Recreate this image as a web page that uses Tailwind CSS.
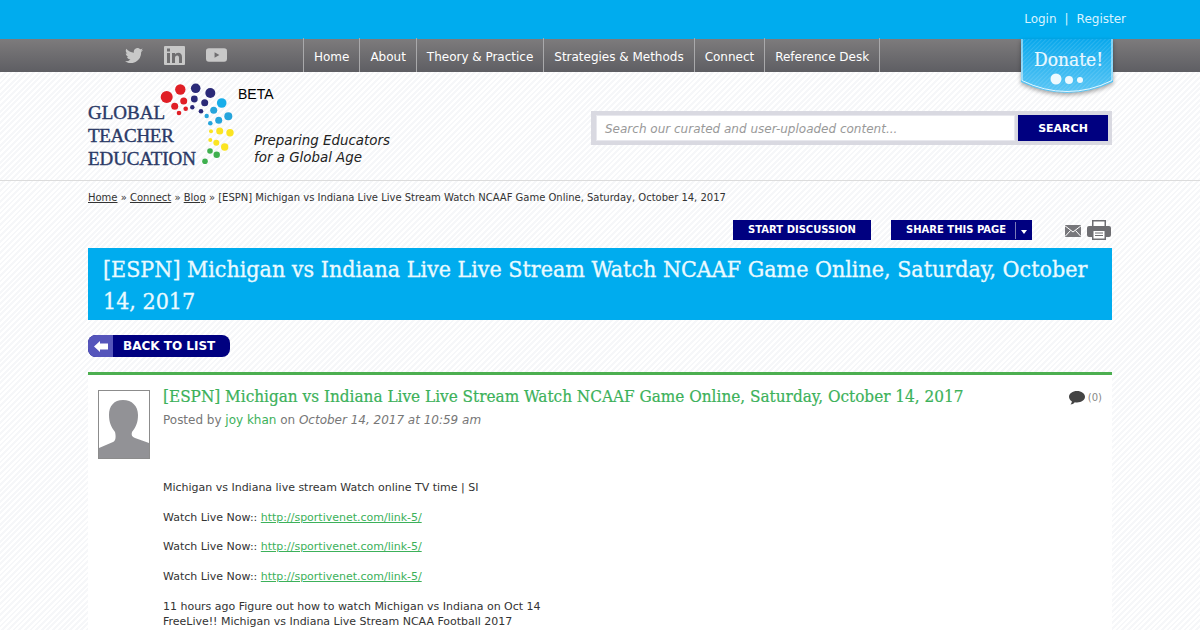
<!DOCTYPE html>
<html lang="en">
<head>
<meta charset="utf-8">
<title>Global Teacher Education</title>
<script src="https://cdn.jsdelivr.net/npm/@tailwindcss/browser@4"></script>
</head>
<body class="h-[630px] overflow-hidden font-['DejaVu_Sans',sans-serif] text-[11px] text-[#333] bg-[repeating-linear-gradient(135deg,#ffffff_0px,#ffffff_2px,#f6f7f9_2px,#f6f7f9_4px)]">
<div class="flex h-[39px] items-center justify-end bg-[#00acee] pr-[74px] pb-[1px] text-xs text-[#d8f3ff]">
  <a>Login</a><span class="mx-2">|</span><a>Register</a>
</div>
<nav class="relative flex h-[33px] bg-[linear-gradient(#7d7b7c,#5e5e63)] pl-[123px] text-xs text-white">
  <div class="flex w-[180px] items-center pb-[1px]">
    <svg class="ml-[1px] h-[15px] w-[20px]" viewBox="0 0 24 20" fill="#c8c8c8"><path d="M24 2.4c-.9.4-1.800.7-2.800.8 1-.6 1.800-1.600 2.200-2.700-.9.6-2 1-3.100 1.200A4.900 4.900 0 0 0 11.900 6.200C7.800 6 4.200 4 1.700.9.400 3.200 1 6.100 3.200 7.500c-.8 0-1.600-.2-2.200-.6 0 2.400 1.700 4.400 3.900 4.900-.7.200-1.500.2-2.200.1.600 2 2.400 3.400 4.600 3.400A9.900 9.900 0 0 1 0 17.800 13.900 13.900 0 0 0 21.500 5.400c1-.7 1.800-1.600 2.500-3z"/></svg>
    <svg class="ml-[20px] h-[19px] w-[21px]" viewBox="0 0 21 19"><rect width="21" height="19" rx="1" fill="#c8c8c8"/><path fill="#6f6e70" d="M3 7h3v10H3zM3 2.500h3v3H3zM8 7h3v1.500c.6-1 1.700-1.700 3.200-1.700 2.600 0 3.800 1.600 3.800 4.500V17h-3v-5c0-1.500-.5-2.500-1.800-2.500S11 10.500 11 12v5H8z"/></svg>
    <svg class="ml-[21px] h-[14px] w-[21px]" viewBox="0 0 22 14"><rect width="22" height="14" rx="3" fill="#c8c8c8"/><path fill="#6f6e70" d="M9 4l5 3-5 3z"/></svg>
  </div>
  <div class="flex border-l border-[#a9a9ab] -mt-[1px] tracking-[-0.01px]">
    <a class="flex items-center border-r border-[#a9a9ab] px-[10px] pt-[4px]">Home</a>
    <a class="flex items-center border-r border-[#a9a9ab] px-[10px] pt-[4px]">About</a>
    <a class="flex items-center border-r border-[#a9a9ab] px-[10px] pt-[4px]">Theory &amp; Practice</a>
    <a class="flex items-center border-r border-[#a9a9ab] px-[10px] pt-[4px]">Strategies &amp; Methods</a>
    <a class="flex items-center border-r border-[#a9a9ab] px-[10px] pt-[4px]">Connect</a>
    <a class="flex items-center border-r border-[#a9a9ab] px-[10px] pt-[4px]">Reference Desk</a>
  </div>
  <div class="absolute left-[1020px] top-[0px] h-[56px] w-[96px]">
    <svg class="absolute inset-0 drop-shadow-[0_2px_2px_rgba(0,0,0,0.35)]" width="96" height="56" viewBox="0 0 96 56">
      <defs>
        <linearGradient id="dg" x1="0" y1="0" x2="0" y2="1"><stop offset="0" stop-color="#08a8ec"/><stop offset="1" stop-color="#5cc6f5"/></linearGradient>
        <pattern id="dh" width="3" height="3" patternUnits="userSpaceOnUse" patternTransform="rotate(-45)"><rect width="3" height="1" fill="#ffffff" fill-opacity="0.12"/></pattern>
      </defs>
      <path d="M1 0H93V43Q70 54 47 54Q24 54 1 43Z" fill="url(#dg)"/>
      <path d="M1 0H93V43Q70 54 47 54Q24 54 1 43Z" fill="url(#dh)"/>
      <path d="M2 0V41.500Q24 52.500 47 52.500Q70 52.500 92 41.500V0" fill="none" stroke="#e4f6fe" stroke-width="1"/>
      <circle cx="36" cy="40" r="5.500" fill="#eef9fe"/><circle cx="49" cy="41" r="4" fill="#eef9fe"/><circle cx="60" cy="41" r="3" fill="#eef9fe"/>
    </svg>
    <span class="absolute left-[14px] top-[9px] font-['DejaVu_Serif_Condensed','DejaVu_Serif',serif] text-[19px] leading-[22px] text-[#eaf8ff] [-webkit-text-stroke:0.2px_#eaf8ff]">Donate!</span>
  </div>
</nav>
<header class="flex h-[109px] items-start justify-between border-b border-[#dcdcdc] px-[88px]">
  <div class="relative h-[108px] w-[310px]">
    <div class="absolute left-0 top-[29px] font-['Liberation_Serif',serif] text-[19px] leading-[23px] text-[#2b3a67] [-webkit-text-stroke:0.4px_#2b3a67]">GLOBAL<br><span class="tracking-[-0.3px]">TEACHER</span><br><span class="tracking-[-0.1px]">EDUCATION</span></div>
    <svg class="absolute left-[62px] top-[0px]" width="90" height="108" viewBox="150 72 90 108">
      <g fill="#e01f26"><circle cx="166.700" cy="97" r="6"/><circle cx="180.300" cy="89.500" r="5.200"/><circle cx="183.700" cy="101" r="3.500"/><circle cx="174.700" cy="106.300" r="3.500"/><circle cx="185.700" cy="108.700" r="2.300"/><circle cx="179" cy="113" r="2.300"/></g>
      <g fill="#2b2a78"><circle cx="195.700" cy="88.300" r="4.800"/><circle cx="210.300" cy="93" r="5"/><circle cx="194.300" cy="99" r="3.400"/><circle cx="204.700" cy="102.700" r="3.500"/><circle cx="192.300" cy="107.300" r="2.200"/><circle cx="201" cy="111.300" r="2.300"/></g>
      <g fill="#26a5dc"><circle cx="221.700" cy="103" r="4.800" fill="#18aeea"/><circle cx="213.700" cy="110.300" r="3.500"/><circle cx="228.300" cy="116.300" r="4"/><circle cx="206.700" cy="116" r="2.200"/><circle cx="218.700" cy="120.300" r="3.500"/><circle cx="210.300" cy="123.300" r="2.300"/></g>
      <g fill="#fbe421"><circle cx="219.700" cy="131" r="3.500"/><circle cx="230" cy="132.700" r="3.700"/><circle cx="211" cy="131.300" r="2"/><circle cx="210.300" cy="140" r="2"/><circle cx="216.300" cy="142.700" r="3"/><circle cx="224.700" cy="147" r="3.700"/></g>
      <g fill="#3fb04f"><circle cx="210" cy="151" r="2.800"/><circle cx="216.700" cy="154.700" r="3.200"/><circle cx="205" cy="161.300" r="2.800"/></g>
    </svg>
    <span class="absolute left-[150px] top-[14px] font-['Liberation_Sans',sans-serif] text-sm leading-4 text-black">BETA</span>
    <div class="absolute left-[166px] top-[60px] text-[13.4px] leading-[17px] italic text-[#222]">Preparing Educators<br>for a Global Age</div>
  </div>
  <form class="mt-[39px] flex h-[34px] w-[521px] items-center bg-[#d9d9e1] pl-[5px]">
    <div class="flex h-[26px] w-[419px] items-center border border-[#e8e8ee] bg-white pl-[8px] pt-[1px] text-xs italic text-[#999]">Search our curated and user-uploaded content...</div>
    <button class="ml-[3px] h-[26px] w-[90px] bg-[#000080] pt-[2px] text-[11px] font-bold text-white">SEARCH</button>
  </form>
</header>
<main class="px-[88px]">
  <div class="pt-[11px] text-[10px] leading-[12px] text-[#333] tracking-[-0.01px]"><a class="underline">Home</a> » <a class="underline">Connect</a> » <a class="underline">Blog</a> » [ESPN] Michigan vs Indiana Live Live Stream Watch NCAAF Game Online, Saturday, October 14, 2017</div>
  <div class="mt-[16px] flex h-[20px] items-center justify-end pr-[1px]">
    <a class="flex h-[20px] w-[138px] items-center justify-center bg-[#000080] pb-[2px] text-[10px] font-bold text-white">START DISCUSSION</a>
    <a class="ml-[20px] flex h-[20px] w-[141px] items-center bg-[#000080] pl-[15px] text-[10px] font-bold text-white"><span class="pb-[2px]">SHARE THIS PAGE</span><span class="ml-[9px] flex h-[17px] flex-1 items-center justify-center border-l border-[#7a7ab8] pr-[1px] pt-[3px]"><svg width="6" height="4" viewBox="0 0 6 4" fill="#fff"><path d="M0 0h6L3 4z"/></svg></span></a>
    <svg class="ml-[33px] mt-[1px]" width="16" height="12" viewBox="0 0 16 12"><rect width="16" height="12" fill="#77777b"/><path d="M0 .8L8 7l8-6.200M0 11.500L5.500 5.500M16 11.500L10.500 5.500" fill="none" stroke="#fff" stroke-width="1"/></svg>
    <svg class="ml-[6px]" width="24" height="20" viewBox="0 0 24 20"><path fill="#6e6e72" d="M5 0h14v6h3a2 2 0 0 1 2 2v7a2 2 0 0 1-2 2h-3v3H5v-3H2a2 2 0 0 1-2-2V8a2 2 0 0 1 2-2h3z"/><path fill="#fff" d="M6.500 1.500h11V6h-11zM6.500 11h11v7.500h-11z"/><path fill="#6e6e72" d="M8 12.500h8v1H8zM8 15h8v1H8z"/></svg>
  </div>
  <h1 class="mt-[8px] h-[72px] bg-[#00acee] px-[15px] py-[5px] font-['DejaVu_Serif_Condensed','DejaVu_Serif',serif] text-[23px] leading-[32px] text-[#eafaff] [-webkit-text-stroke:0.3px_#eafaff]">[ESPN] Michigan vs Indiana Live Live Stream Watch NCAAF Game Online, Saturday, October 14, 2017</h1>
  <a class="mt-[15px] flex h-[22px] w-[142px] items-center overflow-hidden rounded-[8px] bg-[#000080] text-xs font-bold text-white">
    <span class="flex h-full w-[25px] items-center justify-center bg-[#5555bb]"><svg width="14" height="11" viewBox="0 0 14 11" fill="#fff"><path d="M0 5.500L6 0v2.500h8v6H6v2.500z"/></svg></span>
    <span class="ml-[10px]">BACK TO LIST</span>
  </a>
  <article class="mt-[15px] flex h-[300px] border-t-[3px] border-[#4caf50] bg-white pl-[10px] pr-[10px] pt-[15px]">
    <div class="h-[69px] w-[52px] shrink-0 overflow-hidden border border-[#8c8c8c] bg-white">
      <svg width="50" height="67" viewBox="0 0 50 67"><path fill="#929296" d="M24 9c9 0 15 6 15 15 0 7-2 12-6 17-1 3 0 5 3 6l14 5v15H0V57l14-6c3-1 3-6 2-10-4-5-6-10-6-17 0-9 5-15 14-15z"/></svg>
    </div>
    <div class="ml-[13px] flex-1">
      <div class="flex items-start justify-between">
        <h2 class="-mt-[5px] font-['DejaVu_Serif_Condensed','DejaVu_Serif',serif] text-[17px] leading-[22px] text-[#3cb15a] [-webkit-text-stroke:0.2px_#3cb15a]">[ESPN] Michigan vs Indiana Live Live Stream Watch NCAAF Game Online, Saturday, October 14, 2017</h2>
        <div class="flex items-center pt-[1px] text-[10px] leading-[12px] text-[#888]">
          <svg width="16" height="14" viewBox="0 0 16 14" fill="#444"><path d="M8 0c4.400 0 8 2.500 8 5.700s-3.600 5.700-8 5.700c-.8 0-1.500-.1-2.200-.2C4.700 12.500 3 13.500 1.500 13.500c.8-.9 1.300-2 1.300-3.300C1.100 9.200 0 7.600 0 5.700 0 2.500 3.600 0 8 0z"/></svg>
          <span class="ml-[3px]">(0)</span>
        </div>
      </div>
      <div class="mt-[5px] text-xs leading-[16px] text-[#777] tracking-[-0.01px]">Posted by <a class="text-[#3cb15a]">joy khan</a> on <em>October 14, 2017 at 10:59 am</em></div>
      <div class="mt-[53px] flex flex-col gap-[14.8px] leading-[14.9px] text-[#333] tracking-[-0.01px]">
        <p>Michigan vs Indiana live stream Watch online TV time | SI</p>
        <p>Watch Live Now:: <a class="text-[#3cb15a] underline">http://sportivenet.com/link-5/</a></p>
        <p>Watch Live Now:: <a class="text-[#3cb15a] underline">http://sportivenet.com/link-5/</a></p>
        <p>Watch Live Now:: <a class="text-[#3cb15a] underline">http://sportivenet.com/link-5/</a></p>
        <p>11 hours ago Figure out how to watch Michigan vs Indiana on Oct 14<br>FreeLive!! Michigan vs Indiana Live Stream NCAA Football 2017</p>
      </div>
    </div>
  </article>
</main>
</body>
</html>
